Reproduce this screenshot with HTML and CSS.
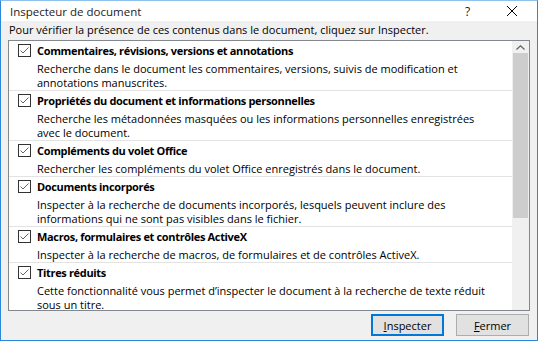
FILE: index.html
```html
<!DOCTYPE html>
<html lang="fr">
<head>
    <meta charset="UTF-8">
    <title>Inspecteur de document</title>
    <link rel="stylesheet" href="styles.css">
</head>
<body>
    <div class="dialog">
        <div class="titlebar">
            <span class="title">Inspecteur de document</span>
            <span class="help">?</span>
            <span class="close">
                <svg width="12" height="12" viewBox="0 0 12 12"><path d="M1 1 L11 11 M11 1 L1 11" stroke="#000" stroke-width="1" fill="none"/></svg>
            </span>
        </div>

        <p class="intro">Pour vérifier la présence de ces contenus dans le document, cliquez sur Inspecter.</p>

        <div class="listbox">
            <div class="items">
                <div class="item">
                    <div class="item-head">
                        <span class="check"><svg width="11" height="11" viewBox="0 0 11 11"><path d="M1.5 5.5 L4 8 L9.5 2.5" stroke="#666" stroke-width="1" fill="none"/></svg></span>
                        <span class="item-title">Commentaires, révisions, versions et annotations</span>
                    </div>
                    <p class="item-desc">Recherche dans le document les commentaires, versions, suivis de modification et annotations manuscrites.</p>
                </div>
                <div class="item">
                    <div class="item-head">
                        <span class="check"><svg width="11" height="11" viewBox="0 0 11 11"><path d="M1.5 5.5 L4 8 L9.5 2.5" stroke="#666" stroke-width="1" fill="none"/></svg></span>
                        <span class="item-title">Propriétés du document et informations personnelles</span>
                    </div>
                    <p class="item-desc">Recherche les métadonnées masquées ou les informations personnelles enregistrées avec le document.</p>
                </div>
                <div class="item">
                    <div class="item-head">
                        <span class="check"><svg width="11" height="11" viewBox="0 0 11 11"><path d="M1.5 5.5 L4 8 L9.5 2.5" stroke="#666" stroke-width="1" fill="none"/></svg></span>
                        <span class="item-title">Compléments du volet Office</span>
                    </div>
                    <p class="item-desc">Rechercher les compléments du volet Office enregistrés dans le document.</p>
                </div>
                <div class="item">
                    <div class="item-head">
                        <span class="check"><svg width="11" height="11" viewBox="0 0 11 11"><path d="M1.5 5.5 L4 8 L9.5 2.5" stroke="#666" stroke-width="1" fill="none"/></svg></span>
                        <span class="item-title">Documents incorporés</span>
                    </div>
                    <p class="item-desc">Inspecter à la recherche de documents incorporés, lesquels peuvent inclure des informations qui ne sont pas visibles dans le fichier.</p>
                </div>
                <div class="item">
                    <div class="item-head">
                        <span class="check"><svg width="11" height="11" viewBox="0 0 11 11"><path d="M1.5 5.5 L4 8 L9.5 2.5" stroke="#666" stroke-width="1" fill="none"/></svg></span>
                        <span class="item-title">Macros, formulaires et contrôles ActiveX</span>
                    </div>
                    <p class="item-desc">Inspecter à la recherche de macros, de formulaires et de contrôles ActiveX.</p>
                </div>
                <div class="item">
                    <div class="item-head">
                        <span class="check"><svg width="11" height="11" viewBox="0 0 11 11"><path d="M1.5 5.5 L4 8 L9.5 2.5" stroke="#666" stroke-width="1" fill="none"/></svg></span>
                        <span class="item-title">Titres réduits</span>
                    </div>
                    <p class="item-desc">Cette fonctionnalité vous permet d’inspecter le document à la recherche de texte réduit sous un titre.</p>
                </div>
            </div>
            <div class="scrollbar">
                <div class="scroll-up">
                    <svg width="9" height="5" viewBox="0 0 9 5"><path d="M0.5 4.5 L4.5 0.8 L8.5 4.5" stroke="#606060" stroke-width="1.2" fill="none"/></svg>
                </div>
                <div class="scroll-thumb"></div>
            </div>
        </div>

        <div class="buttons">
            <button class="btn btn-default"><u>I</u>nspecter</button>
            <button class="btn"><u>F</u>ermer</button>
        </div>
    </div>
</body>
</html>
```

FILE: styles.css
```css
body {
    margin: 0;
    font-family: "Open Sans", "Noto Sans", sans-serif;
    font-size: 11px;
    color: #000;
}
.dialog {
    width: 538px;
    height: 341px;
    box-sizing: border-box;
    border: 1px solid #2a87da;
    border-top-color: #8ec1ec;
    background: #f0f0f0;
    display: flex;
    flex-direction: column;
    overflow: hidden;
}
.titlebar {
    height: 20px;
    background: #fff;
    display: flex;
    align-items: center;
    padding-left: 9px;
}
.title {
    flex: 1;
    font-size: 11.5px;
    color: #222;
}
.help {
    width: 24px;
    font-size: 12px;
    color: #222;
}
.close {
    width: 46px;
    display: flex;
    justify-content: center;
    padding-right: 2px;
}
.intro {
    margin: 0;
    padding: 1px 8px 0;
    height: 18px;
    line-height: 16px;
}
.listbox {
    margin: 0 7px;
    border: 1px solid #828790;
    background: #fff;
    height: 269px;
    display: flex;
    overflow: hidden;
}
.items {
    flex: 1;
}
.item {
    padding-top: 1px;
    border-bottom: 1px solid #e3e3e3;
}
.item-head {
    display: flex;
    align-items: center;
    height: 16px;
    padding-left: 9px;
}
.check {
    width: 11px;
    height: 11px;
    border: 1px solid #333;
    margin-right: 6px;
    display: flex;
}
.item-title {
    font-weight: bold;
    letter-spacing: -0.34px;
}
.item-desc {
    margin: 4px 0 0;
    padding-left: 28px;
    padding-right: 20px;
    line-height: 14px;
}
.scrollbar {
    width: 17px;
    background: #f0f0f0;
    display: flex;
    flex-direction: column;
}
.scroll-up {
    height: 12px;
    display: flex;
    justify-content: center;
    align-items: center;
}
.scroll-thumb {
    height: 165px;
    margin: 0 1px;
    background: #cdcdcd;
}
.buttons {
    display: flex;
    justify-content: flex-end;
    gap: 12px;
    padding: 3px 8px 0;
}
.btn {
    width: 73px;
    height: 22px;
    box-sizing: border-box;
    border: 1px solid #adadad;
    background: #e1e1e1;
    font-family: inherit;
    font-size: 11px;
    padding: 0;
    color: #000;
}
.btn-default {
    border: 2px solid #0078d7;
}
```
